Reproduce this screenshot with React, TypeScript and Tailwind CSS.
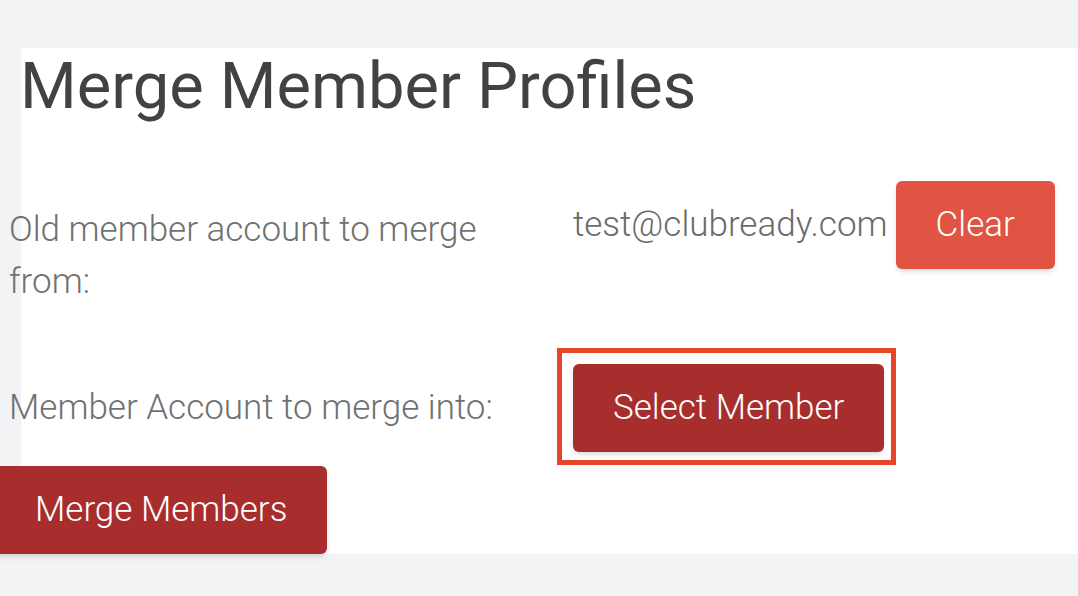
export default function App() {
  return (
    <div className="min-h-screen overflow-hidden bg-[#f2f3f5] pt-12 font-['Roboto',sans-serif]">
      <div className="ml-[21px] h-[506px] bg-white pt-[6px]">
        {/* page heading */}
        <h1 className="-ml-px text-[65px] leading-none font-normal text-[#424242]">
          Merge Member Profiles
        </h1>

        {/* old account row */}
        <div className="mt-[62px] -ml-[12px] grid grid-cols-[564px_auto] items-start">
          <div className="pt-[23px] pr-[70px] text-[35px] leading-[52px] font-light text-[#717171]">
            Old member account to merge from:
          </div>
          <div className="flex h-[88px] items-center gap-2">
            <span className="text-[35px] font-light text-[#6b6b6b]">test@clubready.com</span>
            <button className="flex h-[88px] items-center rounded-md bg-[#e15444] px-10 text-[35px] font-light text-white shadow-md">
              Clear
            </button>
          </div>
        </div>

        {/* target account row */}
        <div className="mt-[56px] -ml-[12px] grid grid-cols-[564px_auto] items-start">
          <div className="pt-[18px] text-[35px] leading-[52px] font-light text-[#717171]">
            Member Account to merge into:
          </div>
          <div className="relative w-fit">
            <button className="flex h-[88px] items-center rounded-md bg-[#a82e2e] px-10 text-[35px] font-light text-white shadow-md">
              Select Member
            </button>
            <div className="pointer-events-none absolute -top-4 -left-4 -right-3 -bottom-[13px] border-[5px] border-[#e8442a]" />
          </div>
        </div>

        <button className="mt-[14px] -ml-[26px] flex h-[88px] items-center rounded-md bg-[#a82e2e] px-10 text-[35px] font-light text-white shadow-md">
          Merge Members
        </button>
      </div>
    </div>
  );
}
